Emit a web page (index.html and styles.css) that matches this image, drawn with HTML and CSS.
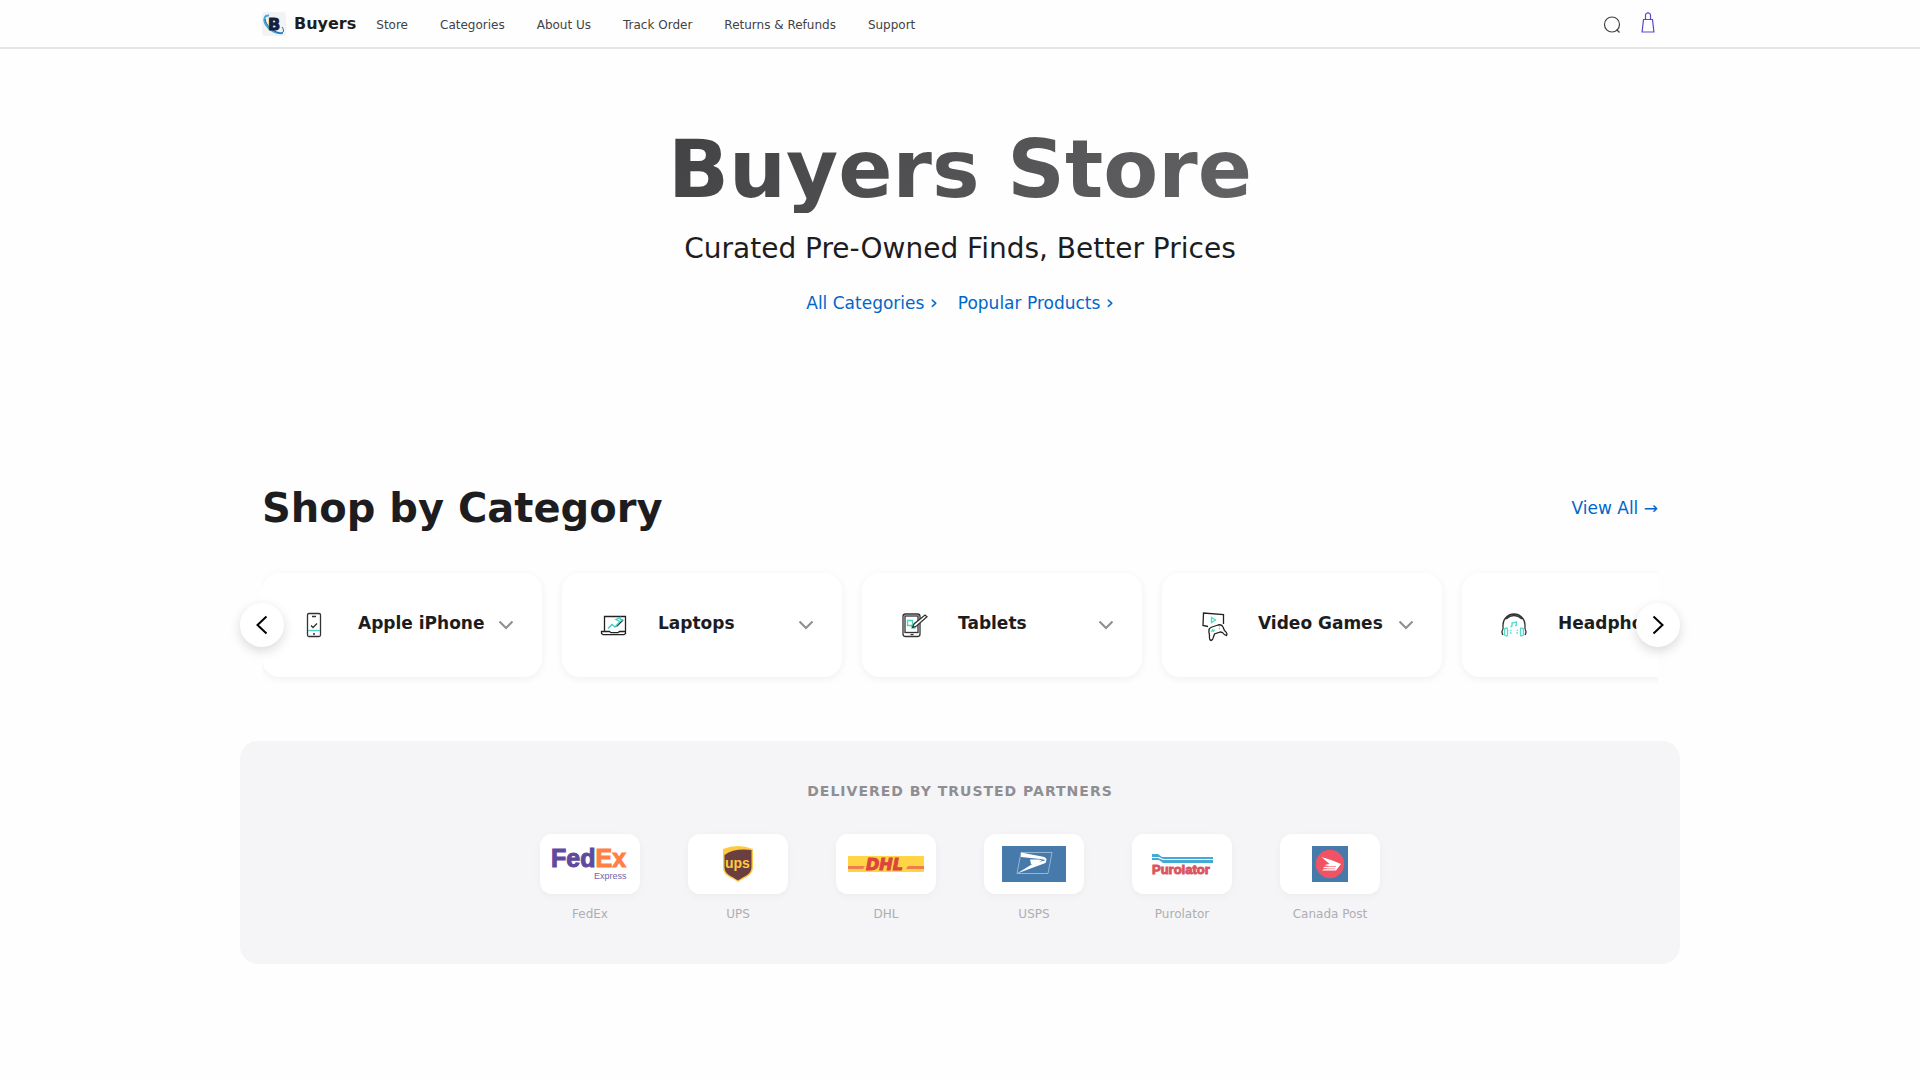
FILE: index.html
```html
<!DOCTYPE html>
<html lang="en">
<head>
    <meta charset="UTF-8">
    <meta name="viewport" content="width=device-width, initial-scale=1.0">
    <title>Buyers Store</title>
    <link rel="stylesheet" href="styles.css">
</head>
<body>
    <header class="site-header">
        <div class="header-inner">
            <a href="#" class="brand">
                <svg class="brand-logo" viewBox="0 0 24 24" aria-hidden="true">
                    <rect width="24" height="24" rx="3" fill="#f3f3f4"/>
                    <path d="M7 3.500C2 3 1 8 4 13s10 9 17 8" fill="none" stroke="#48a9e0" stroke-width="2"/>
                    <path d="M3 7c1 6 7 12 14 14 4 1 6-2 3-6" fill="none" stroke="#1c5fa8" stroke-width="1"/>
                    <text x="6" y="18" class="brand-letter">B</text>
                </svg>
                <span>Buyers</span>
            </a>
            <nav class="main-nav">
                <a href="#">Store</a>
                <a href="#">Categories</a>
                <a href="#">About Us</a>
                <a href="#">Track Order</a>
                <a href="#">Returns &amp; Refunds</a>
                <a href="#">Support</a>
            </nav>
            <div class="header-actions">
                <button type="button" class="icon-btn" aria-label="Search">
                    <svg viewBox="0 0 20 24" fill="none" stroke="#424245" stroke-width="1.2"><circle cx="10" cy="12.500" r="7.5"/><path d="M14.500 17.500l3 3"/></svg>
                </button>
                <a href="#" class="icon-btn" aria-label="Bag">
                    <svg viewBox="0 0 20 24" fill="none" stroke="#5a48c8" stroke-width="1.2"><path d="M5.5 7.500h9l1.400 12.500H4.100zM7.500 7.500V3q0-1 1-1.500L10 .7l1.500.8q1 .5 1 1.500v4.500"/></svg>
                </a>
            </div>
        </div>
    </header>

    <main>
        <section class="hero">
            <h1>Buyers Store</h1>
            <p>Curated Pre-Owned Finds, Better Prices</p>
            <div class="hero-links">
                <a href="#categories">All Categories <span>›</span></a>
                <a href="#">Popular Products <span>›</span></a>
            </div>
        </section>

        <section class="categories" id="categories">
            <div class="section-head">
                <h2>Shop by Category</h2>
                <a href="#">View All →</a>
            </div>
            <div class="carousel">
                <div class="carousel-track">
                    <button type="button" class="category-card">
                        <svg class="category-icon" viewBox="0 0 48 48" fill="none" stroke="#333" stroke-width="1.3">
                            <rect x="17.500" y="12.500" width="13" height="23" rx="1.500"/>
                            <path d="M22 15.500h4M21 24.500l2 2 4-4M23 33h2"/>
                            <path d="M18 29.500h12" stroke="#4fd1c5"/>
                        </svg>
                        <span class="category-name">Apple iPhone</span>
                        <svg class="chevron" viewBox="0 0 24 24"><path d="M5.500 8.500l6.500 6.500 6.500-6.500"/></svg>
                    </button>
                    <button type="button" class="category-card">
                        <svg class="category-icon" viewBox="0 0 48 48" fill="none" stroke="#222" stroke-width="1.3">
                            <path d="M14.500 30V15.500h21V30M11.500 30.500h8l1.500 1.200h7l1.500-1.200h6v2l-1.500 1.200H13l-1.500-1.200zM26.500 25.500l6.500-6.500"/>
                            <path d="M18 27.500l4-4 3 2.500 5-5.500M26 18.500l2-1 2-1 .5 2 2 .5-2.500 1.500z" stroke="#38cfc8"/>
                        </svg>
                        <span class="category-name">Laptops</span>
                        <svg class="chevron" viewBox="0 0 24 24"><path d="M5.500 8.500l6.500 6.500 6.500-6.500"/></svg>
                    </button>
                    <button type="button" class="category-card">
                        <svg class="category-icon" viewBox="0 0 48 48" fill="none" stroke="#333" stroke-width="1.3">
                            <rect x="13" y="13" width="17" height="22.500" rx="2.500"/>
                            <rect x="15" y="15" width="13" height="16.500"/>
                            <path d="M20.500 33.500h3"/>
                            <path d="M17.500 19.500h5v5h-5zM21 25l3 2.500 2-1.500" stroke="#45d5bd"/>
                            <path d="M22.500 26.500l1.500-3.500 11-9 2 1.800-10.500 9.200z" fill="#fff"/>
                        </svg>
                        <span class="category-name">Tablets</span>
                        <svg class="chevron" viewBox="0 0 24 24"><path d="M5.500 8.500l6.500 6.500 6.500-6.500"/></svg>
                    </button>
                    <button type="button" class="category-card">
                        <svg class="category-icon" viewBox="0 0 48 48" fill="none" stroke="#222" stroke-width="1.3">
                            <path d="M18 25.500l-5-1 .5-12.500L33.500 13.500V23"/>
                            <path d="M21.500 16.500l4 2.500-4 2.500zM21 30.500l4-1.500M22.500 28l1 3M29 25.500l1 .5M29 28l1-.5" stroke="#45dfbd"/>
                            <path d="M19 29q0-2 3-3l6-2q4-1 5 2l1.500 3.500q3.500 3 2 5-2 0-4-3l-2-.5-6 2-1 3q-.5 3-2.500 3.500-2-.5-1.500-5.500-1-3-.5-5z"/>
                        </svg>
                        <span class="category-name">Video Games</span>
                        <svg class="chevron" viewBox="0 0 24 24"><path d="M5.500 8.500l6.500 6.500 6.500-6.500"/></svg>
                    </button>
                    <button type="button" class="category-card">
                        <svg class="category-icon" viewBox="0 0 48 48" fill="none" stroke="#333" stroke-width="1.3">
                            <path d="M13 28v-4a11 11 0 0 1 22 0v4M16 18q8-7 16 0M13 28q-2 3 0 6M35 28q2 3 0 6"/>
                            <path d="M14.500 28q3-2 3 0v6q0 2-3 0zM33.500 28q-3-2-3 0v6q0 2 3 0zM20 29.500l1.500-.5M20 32h1.500M28 29.500l-1.500-.5M28 32h-1.500M22 25.500v-3.500l4.500-1v3.500M22 25.500h-1.500M26.500 24.500H25" stroke="#4fdcc8"/>
                        </svg>
                        <span class="category-name">Headphones</span>
                        <svg class="chevron" viewBox="0 0 24 24"><path d="M5.500 8.500l6.500 6.500 6.500-6.500"/></svg>
                    </button>
                </div>
                <button type="button" class="carousel-btn prev" aria-label="Previous">
                    <svg viewBox="0 0 24 24"><path d="M16.500 3.500l-9 8.500 9 8.500"/></svg>
                </button>
                <button type="button" class="carousel-btn next" aria-label="Next">
                    <svg viewBox="0 0 24 24"><path d="M7.500 3.500l9 8.500-9 8.500"/></svg>
                </button>
            </div>
        </section>

        <section class="partners">
            <h3>Delivered by Trusted Partners</h3>
            <ul class="partner-list">
                <li>
                    <div class="partner-logo">
                        <svg width="80" height="44" viewBox="0 0 80 44" aria-hidden="true">
                            <text x="1" y="25" class="fedex-text">Fed<tspan class="fedex-ex">Ex</tspan></text>
                            <text x="44" y="37" class="fedex-sub">Express</text>
                        </svg>
                    </div>
                    <span>FedEx</span>
                </li>
                <li>
                    <div class="partner-logo">
                        <svg width="30" height="36" viewBox="0 0 30 36" aria-hidden="true">
                            <path d="M0 3Q15-3 30 3v18c0 9-8 10-15 15C8 31 0 30 0 21z" fill="#ffc943"/>
                            <path d="M1.500 9Q11 2 28.500 4v17c0 8-7 9-13.500 13.500C8.500 30 1.500 29 1.500 21z" fill="#6b3f40"/>
                            <text x="2" y="22" class="ups-text">ups</text>
                        </svg>
                    </div>
                    <span>UPS</span>
                </li>
                <li>
                    <div class="partner-logo">
                        <svg width="76" height="24" viewBox="0 0 76 24" aria-hidden="true">
                            <rect y="4" width="76" height="16" fill="#ffd445"/>
                            <path d="M0 14h17l-2 3H0zM60 14h16v3H58z" fill="#ef7d4a"/>
                            <text x="18" y="18" class="dhl-text">DHL</text>
                        </svg>
                    </div>
                    <span>DHL</span>
                </li>
                <li>
                    <div class="partner-logo">
                        <svg width="64" height="36" viewBox="0 0 64 36" aria-hidden="true">
                            <rect width="64" height="36" fill="#457aaa"/>
                            <path d="M19 6.500h31L46 27.500H15z" fill="none" stroke="#b9cfe1" stroke-width=".7"/>
                            <path d="M19 6.500l21 4q5 1 4.500 3.500L43.500 17 15 27.500 32 17l11-2.500q-1-1.500-5-1.500L19 11z" fill="#fff"/>
                            <path d="M28 13.500h9l3 1-5 2.500-4 2-2-1z" fill="#fff"/>
                        </svg>
                    </div>
                    <span>USPS</span>
                </li>
                <li>
                    <div class="partner-logo">
                        <svg width="62" height="26" viewBox="0 0 62 26" aria-hidden="true">
                            <path d="M1 3h6l4 3h51v2H12L8 6H1zM1 7h6l5 2h50v3H12L8 9H1z" fill="#45a9d6"/>
                            <text x="1" y="23" class="purolator-text">Purolator</text>
                        </svg>
                    </div>
                    <span>Purolator</span>
                </li>
                <li>
                    <div class="partner-logo">
                        <svg width="36" height="36" viewBox="0 0 36 36" aria-hidden="true">
                            <rect width="36" height="36" fill="#457aaa"/>
                            <circle cx="18" cy="18" r="14.300" fill="#ef5364"/>
                            <path d="M9.500 11l11 3.500 8.500 3.500-5 6.500H10l2-1.500h5L11 22l2-1.500h5L12.500 19l5-1z" fill="#fff"/>
                            <path d="M13 20.500h11M12 22.800h11" stroke="#ef5364" stroke-width=".6"/>
                        </svg>
                    </div>
                    <span>Canada Post</span>
                </li>
            </ul>
        </section>
    </main>
</body>
</html>
```
FILE: styles.css
```css
* {
    margin: 0;
    padding: 0;
    box-sizing: border-box;
}

body {
    font-family: "DejaVu Sans", sans-serif;
    font-size: 17px;
    color: #1d1d1f;
    background: #fefefe;
}

a {
    color: #0066cc;
    text-decoration: none;
}

button {
    font: inherit;
    color: inherit;
    border: none;
    background: none;
    cursor: pointer;
}

/* Header */
.site-header {
    border-bottom: 2px solid #e5e5e5;
}

.header-inner {
    max-width: 1440px;
    height: 47px;
    margin: 0 auto;
    padding: 0 22px;
    display: flex;
    align-items: center;
}

.brand {
    display: flex;
    align-items: center;
    gap: 8px;
    margin-right: 20px;
    font-size: 16px;
    font-weight: 700;
    color: #1d1d1f;
}

.brand-logo {
    width: 24px;
    height: 24px;
}

.brand-letter {
    font: 700 16px "DejaVu Sans", sans-serif;
    fill: #12213f;
    stroke: #12213f;
    stroke-width: 1px;
}

.main-nav {
    display: flex;
    gap: 32px;
    padding-top: 2px;
    font-size: 12px;
}

.main-nav a {
    color: #424245;
}

.header-actions {
    display: flex;
    gap: 16px;
    margin-left: auto;
}

.icon-btn svg {
    display: block;
    width: 20px;
    height: 24px;
}

/* Hero */
.hero {
    padding: 78px 22px 171px;
    text-align: center;
}

.hero h1 {
    display: inline-block;
    font-size: 80px;
    line-height: 86px;
    background: linear-gradient(135deg, #424245 0%, #636366 100%);
    -webkit-background-clip: text;
    background-clip: text;
    -webkit-text-fill-color: transparent;
}

.hero p {
    margin-top: 20px;
    font-size: 28px;
    line-height: 32px;
}

.hero-links {
    display: flex;
    justify-content: center;
    gap: 20px;
    margin-top: 25px;
    line-height: 24px;
}

.hero-links span {
    font-size: 20px;
}

/* Categories */
.categories {
    max-width: 1440px;
    margin: 0 auto;
    padding: 0 22px;
}

.section-head {
    display: flex;
    justify-content: space-between;
    align-items: center;
}

.section-head h2 {
    font-size: 40px;
    line-height: 44px;
}

.carousel {
    position: relative;
    margin-top: 39px;
}

.carousel-track {
    display: flex;
    gap: 20px;
    padding: 4px 0 20px;
    overflow: hidden;
}

.category-card {
    flex: 0 0 280px;
    height: 104px;
    display: flex;
    align-items: center;
    padding: 0 24px 0 28px;
    border-radius: 18px;
    background: #fff;
    box-shadow: 0 2px 8px rgba(0, 0, 0, 0.06);
    text-align: left;
}

.category-icon {
    width: 48px;
    height: 48px;
    margin-right: 20px;
}

.category-name {
    flex: 1;
    padding-bottom: 4px;
    font-weight: 700;
    white-space: nowrap;
}

.chevron {
    width: 24px;
    height: 24px;
    fill: none;
    stroke: #8e8e93;
    stroke-width: 2;
}

.carousel-btn {
    position: absolute;
    top: 34px;
    width: 44px;
    height: 44px;
    display: flex;
    align-items: center;
    justify-content: center;
    border-radius: 50%;
    background: #fff;
    box-shadow: 0 4px 12px rgba(0, 0, 0, 0.15);
}

.carousel-btn.prev {
    left: -22px;
}

.carousel-btn.next {
    right: -22px;
}

.carousel-btn svg {
    width: 24px;
    height: 24px;
    fill: none;
    stroke: #000;
    stroke-width: 2;
}

/* Delivery partners */
.partners {
    max-width: 1440px;
    margin: 44px auto 0;
    padding: 40px 22px;
    border-radius: 18px;
    background: #f5f5f7;
    text-align: center;
}

.partners h3 {
    font-size: 14px;
    line-height: 20px;
    letter-spacing: 1px;
    text-transform: uppercase;
    color: #8e8e93;
}

.partner-list {
    display: flex;
    justify-content: center;
    gap: 48px;
    margin-top: 33px;
    list-style: none;
}

.partner-list span {
    display: block;
    margin-top: 10px;
    font-size: 12px;
    line-height: 20px;
    color: #aeaeb2;
}

.partner-logo {
    width: 100px;
    height: 60px;
    display: flex;
    align-items: center;
    justify-content: center;
    border-radius: 12px;
    background: #fff;
    box-shadow: 0 2px 8px rgba(0, 0, 0, 0.04);
}

.fedex-text {
    font: 700 25px "Liberation Sans", sans-serif;
    fill: #5f4a9d;
    stroke: #5f4a9d;
    stroke-width: 1px;
}

.fedex-ex {
    fill: #ff8045;
    stroke: #ff8045;
}

.fedex-sub {
    font: 9px "Liberation Sans", sans-serif;
    fill: #7465a9;
}

.ups-text {
    font: 700 14px "Liberation Sans", sans-serif;
    fill: #ffc943;
}

.dhl-text {
    font: italic 700 16px "DejaVu Sans", sans-serif;
    fill: #dc4440;
    stroke: #dc4440;
    stroke-width: 1px;
}

.purolator-text {
    font: 700 13px "Liberation Sans", sans-serif;
    fill: #da5560;
    stroke: #da5560;
    stroke-width: 1px;
}
```
